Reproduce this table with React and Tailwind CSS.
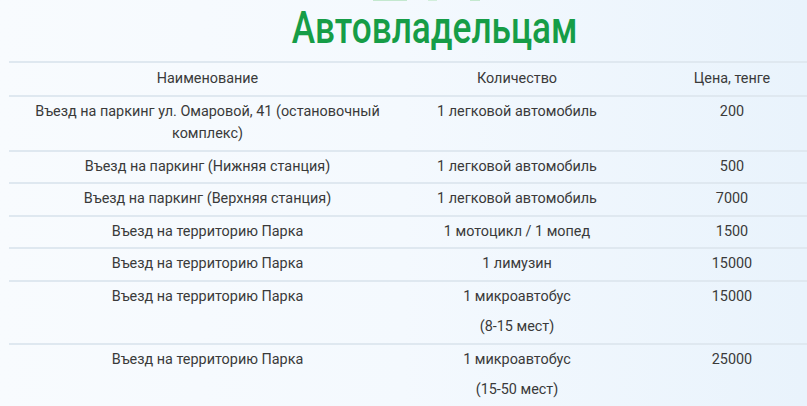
import React from "react";

const rows = [
  { name: ["Въезд на паркинг ул. Омаровой, 41 (остановочный", "комплекс)"], qty: ["1 легковой автомобиль"], price: "200" },
  { name: ["Въезд на паркинг (Нижняя станция)"], qty: ["1 легковой автомобиль"], price: "500" },
  { name: ["Въезд на паркинг (Верхняя станция)"], qty: ["1 легковой автомобиль"], price: "7000" },
  { name: ["Въезд на территорию Парка"], qty: ["1 мотоцикл / 1 мопед"], price: "1500" },
  { name: ["Въезд на территорию Парка"], qty: ["1 лимузин"], price: "15000" },
  { name: ["Въезд на территорию Парка"], qty: ["1 микроавтобус", "(8-15 мест)"], price: "15000" },
  { name: ["Въезд на территорию Парка"], qty: ["1 микроавтобус", "(15-50 мест)"], price: "25000" },
];

export default function App() {
  return (
    <div
      className="w-[807px] h-[406px] overflow-hidden bg-gradient-to-r from-[#f8fbfe] via-[#f4f9fe] to-[#e9f3fc] text-[#3a3a3a]"
      style={{ fontFamily: "Roboto, 'Noto Sans', sans-serif" }}
    >
      <div className="relative flex flex-col h-[61px]">
        <div className="absolute top-0 left-[373px] w-[34px] h-[1px] bg-[#c4e8cf]" />
        <div className="absolute top-0 left-[428px] w-[9px] h-[1px] bg-[#d2eedb]" />
        <div className="absolute top-0 left-[470px] w-[10px] h-[1px] bg-[#c4e8cf]" />
        <div className="flex justify-center pl-[62px] pt-[1px]">
          <div className="text-[44px] leading-[54px] font-medium text-[#169d47] scale-x-[0.8] origin-center">
            Автовладельцам
          </div>
        </div>
      </div>
      <div className="ml-[9px] w-[827px]">
        <div className="grid grid-cols-[397px_222px_208px] border-t-2 border-b-2 border-[#dfe8f0] text-[14.4px] leading-[22.5px]">
          <div className="text-center py-[4.5px]">Наименование</div>
          <div className="text-center py-[4.5px]">Количество</div>
          <div className="text-center py-[4.5px]">Цена, тенге</div>
        </div>
        {rows.map((r, i) => (
          <div
            key={i}
            className="grid grid-cols-[397px_222px_208px] border-b-2 border-[#dfe8f0] text-[14.4px] leading-[22.5px]"
          >
            <div className="text-center py-[4px]">
              {r.name.map((l, j) => (
                <div key={j}>{l}</div>
              ))}
            </div>
            <div className="text-center py-[4px] flex flex-col gap-[8px]">
              {r.qty.map((l, j) => (
                <div key={j}>{l}</div>
              ))}
            </div>
            <div className="text-center py-[4px]">{r.price}</div>
          </div>
        ))}
      </div>
    </div>
  );
}
